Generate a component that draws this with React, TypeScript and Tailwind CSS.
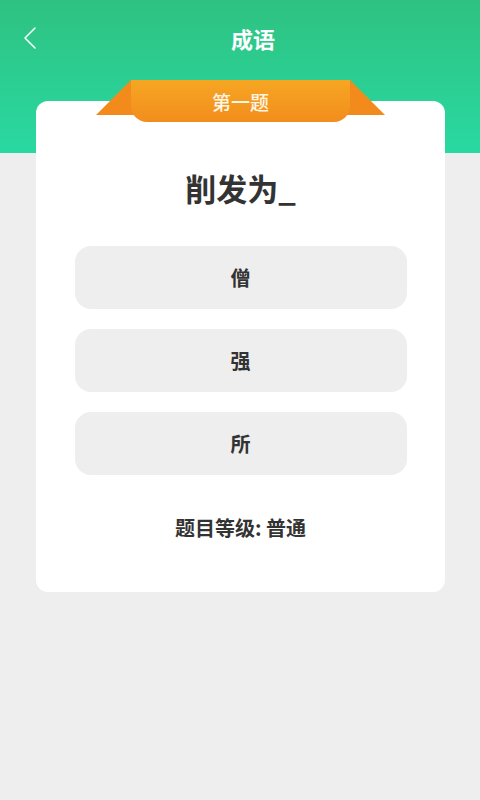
import React from "react";

const font = { fontFamily: '"Noto Sans CJK SC", "Noto Sans", sans-serif' };

export default function App() {
  const options = ["僧", "强", "所"];
  return (
    <div className="w-[480px] h-[800px] bg-[#eeeeee] overflow-hidden" style={font}>
      <div className="h-[153px] bg-gradient-to-b from-[#2ec281] to-[#29d9a2]">
        <div className="relative h-[76px] flex items-center justify-center">
          <svg className="absolute left-[22px] top-[26px]" width="16" height="24" viewBox="0 0 16 24" fill="none">
            <path d="M13 2 L3 12 L13 22" stroke="white" strokeWidth="1.5" strokeLinecap="round" strokeLinejoin="round" />
          </svg>
          <span className="ml-[26px] text-white text-[22px] font-bold leading-none">成语</span>
        </div>
      </div>
      <div className="relative -mt-[52px] ml-[36px] mr-[35px] h-[491px] bg-white rounded-[12px] flex flex-col items-center">
        <div className="absolute -top-[21px] left-[60px] w-[289px] h-[43px]">
          <svg className="absolute left-0 top-0" width="289" height="43" viewBox="0 0 289 43">
            <polygon points="35,0 0,35 45,35 45,0" fill="#f28b1b" />
            <polygon points="254,0 289,35 244,35 244,0" fill="#f28b1b" />
          </svg>
          <div className="absolute left-[35px] top-0 w-[219px] h-[42px] rounded-b-[16px] bg-gradient-to-b from-[#f6a623] to-[#f28d1d] flex items-center justify-center">
            <span className="text-[#fff6e6] text-[19px] font-medium leading-none">第一题</span>
          </div>
        </div>
        <div className="mt-[68px] h-[36px] flex items-center text-[#333333] text-[31px] font-bold leading-none">
          削发为_
        </div>
        <div className="mt-[41px] w-[332px] flex flex-col gap-[20px]">
          {options.map((o) => (
            <div key={o} className="h-[63px] rounded-[16px] bg-[#eeeeee] flex items-center justify-center text-[#333333] text-[20px] font-bold">
              {o}
            </div>
          ))}
        </div>
        <div className="mt-[43px] text-[#333333] text-[20px] font-bold leading-none">题目等级: 普通</div>
      </div>
    </div>
  );
}
